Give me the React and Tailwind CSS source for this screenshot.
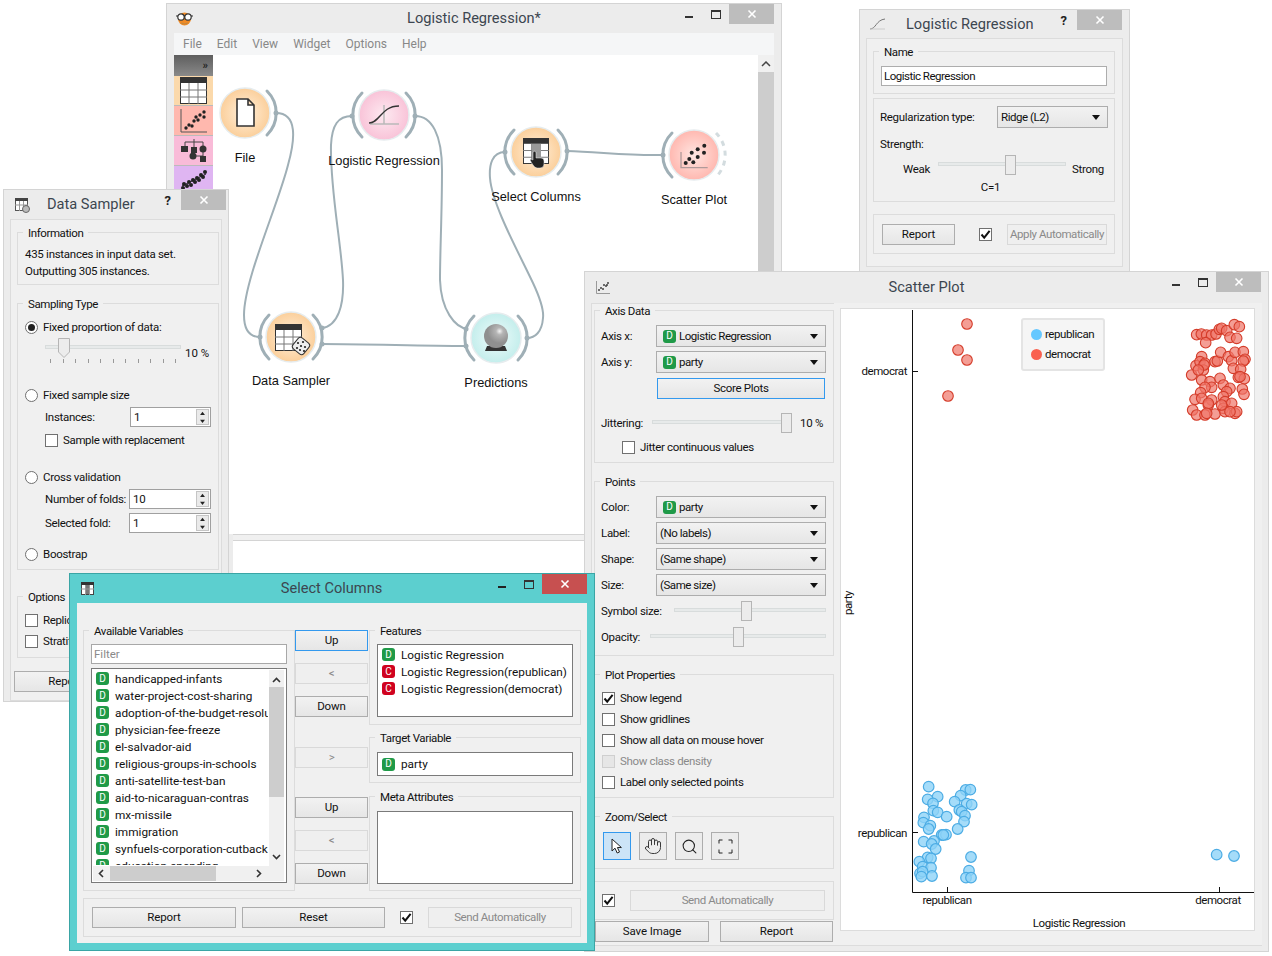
import React from "react";
import { Hand, Search } from "lucide-react";

const X = () => (
  <svg width="10" height="10" viewBox="0 0 10 10"><path d="M1.5 1.5 8.5 8.5M8.5 1.5 1.5 8.5" stroke="#fff" strokeWidth="1.6" /></svg>
);

function Controls({ active, minmax, help, closeClass = "right-[7px]" }) {
  return (
    <div className="absolute inset-0 pointer-events-none">
      {help && <span className={`absolute top-[1px] text-[13px] font-bold text-[#222] ${help}`}>?</span>}
      {minmax && (
        <>
          <span className={`absolute right-[88px] top-[12px] h-[2px] w-[8px] ${active ? "bg-[#222]" : "bg-[#333]"}`} />
          <span className="absolute right-[60px] top-[6px] h-[9px] w-[10px] border border-t-2 border-[#333]" />
        </>
      )}
      <span className={`absolute top-0 flex h-[20px] w-[45px] items-center justify-center ${closeClass} ${active ? "bg-[#c75050]" : "bg-[#bdbdbd]"}`}>
        <X />
      </span>
    </div>
  );
}

function Win({ className, title, titleClass, icon, active, minmax, help, closeClass, children, titleH }) {
  return (
    <div className={`absolute flex flex-col border ${active ? "border-[#3aa5a5] bg-[#5ccfcf]" : "border-[#d4d4d4] bg-[#ececec]"} ${className}`}>
      <div className={`relative flex shrink-0 items-center ${titleH} ${titleClass}`}>
        {icon}
        <span className="text-[14.6px] leading-none text-[#3c4650]">{title}</span>
        <Controls active={active} minmax={minmax} help={help} closeClass={closeClass} />
      </div>
      {children}
    </div>
  );
}

function Group({ title, className = "", children }) {
  return (
    <div className={`relative shrink-0 border border-[#dcdcdc] ${className}`}>
      {title && <span className="absolute left-[5px] top-[-7px] bg-[#f0f0f0] px-[5px] text-[11.5px] leading-[15px] tracking-[-0.4px] text-[#111]">{title}</span>}
      {children}
    </div>
  );
}

function Btn({ className = "", children, disabled, blue }) {
  return (
    <div
      className={`flex shrink-0 items-center justify-center whitespace-nowrap border pt-px text-[11.5px] leading-none ${
        disabled ? "border-[#d9d9d9] bg-[#efefef] tracking-[-0.4px] text-[#8a8a8a]" : blue ? "border-[#3399ee] bg-linear-to-b from-[#f2f2f2] to-[#e6e6e6] tracking-[-0.3px] text-[#111]" : "border-[#adadad] bg-linear-to-b from-[#f2f2f2] to-[#e6e6e6] tracking-[-0.1px] text-[#111]"
      } ${className}`}
    >
      {children}
    </div>
  );
}

function Check({ checked, disabled, label, className = "" }) {
  return (
    <div className={`flex h-[18px] shrink-0 items-center gap-[5px] text-[11.5px] tracking-[-0.35px] ${disabled ? "text-[#8a8a8a]" : "text-[#111]"} ${className}`}>
      <span className={`flex h-[13px] w-[13px] shrink-0 items-center justify-center border ${disabled ? "border-[#cfcfcf] bg-[#e6e6e6]" : "border-[#707070] bg-white"}`}>
        {checked && (
          <svg width="11" height="11" viewBox="0 0 11 11"><path d="M1.5 5.5 4.2 8.6 9.6 1.8" fill="none" stroke="#111" strokeWidth="2" /></svg>
        )}
      </span>
      {label && <span className="relative top-px whitespace-nowrap">{label}</span>}
    </div>
  );
}

function Radio({ checked, label, className = "" }) {
  return (
    <div className={`flex h-[18px] shrink-0 items-center gap-[5px] text-[11.5px] tracking-[-0.28px] text-[#111] ${className}`}>
      <span className="flex h-[13px] w-[13px] shrink-0 items-center justify-center rounded-full border border-[#707070] bg-white">
        {checked && <span className="h-[7px] w-[7px] rounded-full bg-[#222]" />}
      </span>
      <span className="relative top-px whitespace-nowrap">{label}</span>
    </div>
  );
}

function Badge({ t = "D" }) {
  return (
    <span className={`flex h-[13px] w-[13px] shrink-0 items-center justify-center rounded-[3px] text-[10px] leading-none text-white ${t === "D" ? "bg-[#1f9a48]" : "bg-[#d0021f]"}`}>{t}</span>
  );
}

const Arrow = () => (
  <svg className="absolute right-[7px] top-[8px]" width="8" height="5" viewBox="0 0 8 5"><path d="M0 0h8L4 5z" fill="#111" /></svg>
);

function Combo({ className = "", badge, children }) {
  return (
    <div className={`relative flex h-[22px] shrink-0 items-center border border-[#adadad] bg-linear-to-b from-[#f2f2f2] to-[#e6e6e6] text-[11.5px] text-[#111] ${badge ? "gap-[3px] pl-[6px]" : "pl-[3px]"} ${className}`}>
      {badge && <Badge />}
      <span className="relative top-px whitespace-nowrap tracking-[-0.45px]">{children}</span>
      <Arrow />
    </div>
  );
}

function Spin({ value, className = "" }) {
  return (
    <div className={`relative flex h-[20px] shrink-0 items-center border border-[#a0a0a0] bg-white pl-[3px] pt-px text-[11.5px] text-[#111] ${className}`}>
      {value}
      <span className="absolute bottom-[1px] right-[1px] top-[1px] flex w-[13px] flex-col gap-px border border-[#c5c5c5] bg-[#eaeaea]">
        <svg className="flex-1" viewBox="0 0 13 8"><path d="M3.5 6h6L6.5 2z" fill="#222" /></svg>
        <svg className="flex-1" viewBox="0 0 13 8"><path d="M3.5 2h6L6.5 6z" fill="#222" /></svg>
      </span>
    </div>
  );
}

function Slider({ className = "", handle }) {
  return (
    <div className={`relative h-[20px] shrink-0 ${className}`}>
      <div className="absolute inset-x-0 top-[7px] h-[4px] border border-[#d8dcdc] bg-[#e7eaea]" />
      <div className={`absolute top-0 h-[20px] w-[11px] border border-[#b5b5b5] bg-[#ececec] ${handle}`} />
    </div>
  );
}

const Row = ({ className = "", children }) => <div className={`flex items-center whitespace-nowrap text-[11.5px] tracking-[-0.3px] text-[#111] [&>span]:relative [&>span]:top-px ${className}`}>{children}</div>;

const TableGlyph = ({ x = 0, y = 0, s = 27 }) => (
  <g transform={`translate(${x} ${y}) scale(${s / 27})`}>
    <rect x="0.5" y="0.5" width="26" height="26" fill="#fff" stroke="#333" />
    <rect width="27" height="6" fill="#333" />
    <path d="M9 6v21M18 6v21M0 13h27M0 20h27" stroke="#777" strokeWidth="1" />
  </g>
);

const Dots = ({ pts, r = 1.7, fill = "#222" }) => pts.map((p, i) => <circle key={i} cx={p[0]} cy={p[1]} r={r} fill={fill} />);

const scatterPts = [[-8.3, 8], [-4.7, 4], [-0.7, 7.3], [-2.3, -2.3], [3.7, -5.7], [3.7, 2], [10.3, -9.3], [10, -2.3]];

const nodes = [
  { x: 245, y: 113, g: "go", label: "File", ly: 157.5, arcs: "r", icon: (
    <path d="M-8 -14H3L9 -8V13H-8Z M3 -14V-8H9" fill="#fff" stroke="#333" strokeWidth="1.6" />
  ) },
  { x: 384, y: 115, g: "gp", label: "Logistic Regression", ly: 160.5, arcs: "lr", icon: (
    <g fill="none">
      <path d="M0 -10V9M-14 9H15" stroke="#b9b9b9" strokeWidth="1.5" />
      <path d="M-15 8C-4 8 -3 -9 15 -9" stroke="#333" strokeWidth="1.4" />
    </g>
  ) },
  { x: 536, y: 152, g: "go", label: "Select Columns", ly: 196.5, arcs: "lr", icon: (
    <g>
      <TableGlyph x={-13} y={-14} s={26} />
      <rect x="-4" y="-8" width="9" height="20" fill="#9a9a9a" />
      <path d="M-3 0q1.5-1.5 3 0V6h5q3 0 3 3v3q0 4-4 4h-3q-2 0-4-3L-6 8q1-1.5 3 0z" fill="#222" stroke="#eee" strokeWidth="0.5" />
    </g>
  ) },
  { x: 694, y: 155, g: "gr", label: "Scatter Plot", ly: 199.5, arcs: "l", icon: (
    <g>
      <path d="M-13 -3V12.7H13.7" fill="none" stroke="#b09a9a" strokeWidth="1.3" />
      <Dots pts={scatterPts} r={2} />
    </g>
  ) },
  { x: 291, y: 337, g: "go", label: "Data Sampler", ly: 380.5, arcs: "lr", icon: (
    <g>
      <TableGlyph x={-16} y={-13} />
      <g transform="translate(10 9)">
        <rect x="-7" y="-7" width="14" height="14" rx="3" fill="#eee" stroke="#333" transform="rotate(40)" />
        <Dots pts={[[-3, -3], [2, -4], [-4, 2], [0, 0], [4, 1], [-1, 4], [3, 5]]} r={1.1} />
      </g>
    </g>
  ) },
  { x: 496, y: 338, g: "gc", label: "Predictions", ly: 382.5, arcs: "lr", icon: (
    <g>
      <path d="M-9 8H9L11 13H-11Z" fill="#333" />
      <circle cy="-2" r="12" fill="url(#ball)" />
    </g>
  ) },
];

const ArcR = "M 22 -22 A 31 31 0 0 1 22 22";
const ArcL = "M -22 -22 A 31 31 0 0 0 -22 22";

function Workflow() {
  return (
    <div className="relative h-full flex-1 overflow-hidden bg-white">
      <svg className="absolute left-0 top-0" width="545" height="480" viewBox="213 55 545 480">
        <defs>
          <radialGradient id="go"><stop offset="0" stopColor="#fff0dc" /><stop offset="1" stopColor="#fbcf9b" /></radialGradient>
          <radialGradient id="gp"><stop offset="0" stopColor="#fdeaf1" /><stop offset="1" stopColor="#f9c3d8" /></radialGradient>
          <radialGradient id="gr"><stop offset="0" stopColor="#ffe6e2" /><stop offset="1" stopColor="#ffb8b0" /></radialGradient>
          <radialGradient id="gc"><stop offset="0" stopColor="#eefbfb" /><stop offset="1" stopColor="#c4eeec" /></radialGradient>
          <radialGradient id="ball" cx="0.65" cy="0.3"><stop offset="0" stopColor="#f4f4f4" /><stop offset="0.3" stopColor="#b5b5b5" /><stop offset="1" stopColor="#8f8f8f" /></radialGradient>
        </defs>
        <g fill="none" stroke="#9fafb6" strokeWidth="2">
          <path d="M276 113C298 113 295 140 288 165C278 205 244 280 244 315C244 330 250 337 260 337" />
          <path d="M322 328C338 326 344 305 343 280C341 240 330 190 331 145C332 125 338 116 352 116" />
          <path d="M415 116C432 116 442 135 442 170C442 215 440 250 440 280C441 310 455 328 468 329" />
          <path d="M505 152C492 152 489 165 490 178C492 205 520 255 533 283C540 298 544 310 543 318C542 332 535 338 527 338" />
          <path d="M567 151C600 152 630 156 663 155" />
          <path d="M322 344C370 344 420 346 466 346" />
        </g>
        {[[276, 113], [352, 116], [415, 116], [505, 152], [567, 151], [663, 155], [260, 337], [322, 328], [322, 344], [466, 329], [466, 346], [527, 338]].map((p, i) => (
          <circle key={i} cx={p[0]} cy={p[1]} r="2.5" fill="#9fafb6" />
        ))}
        {nodes.map((n) => (
          <g key={n.label} transform={`translate(${n.x} ${n.y})`}>
            <circle r="25" fill={`url(#${n.g})`} stroke="#e6ecee" strokeWidth="1.5" />
            {n.arcs.includes("r") && <path d={ArcR} fill="none" stroke="#9fafb6" strokeWidth="3" strokeLinecap="round" />}
            {n.arcs.includes("l") && <path d={ArcL} fill="none" stroke="#9fafb6" strokeWidth="3" strokeLinecap="round" />}
            {n.label === "Scatter Plot" && <path d={ArcR} fill="none" stroke="#d3dcdf" strokeWidth="3" strokeDasharray="5 5" />}
            {n.icon}
          </g>
        ))}
      </svg>
      {nodes.map((n) => (
        <span
          key={n.label}
          className="absolute -translate-x-1/2 -translate-y-1/2 whitespace-nowrap [font-family:'Liberation_Sans',sans-serif] text-[12.8px] leading-none text-[#111]"
          style={{ left: n.x - 213, top: n.ly - 55 }}
        >
          {n.label}
        </span>
      ))}
    </div>
  );
}

const Side = ({ bg, children, h = "h-[30px]" }) => (
  <div className={`flex shrink-0 items-center justify-center border-b border-[#bbb] ${bg} ${h}`}>{children}</div>
);

function MainWindow() {
  return (
    <Win className="left-[166px] top-[3px] h-[700px] w-[616px]" title="Logistic Regression*" titleH="h-[29px]" titleClass="justify-center" minmax
      icon={
        <svg className="absolute left-[9px] top-[7px]" width="17" height="15" viewBox="0 0 17 15">
          <circle cx="8.5" cy="8" r="6.5" fill="#f08a24" />
          <path d="M5 12q3.5 2 7 0" stroke="#b84" fill="none" />
          <circle cx="5" cy="6" r="3.2" fill="#fff" stroke="#333" strokeWidth="1.2" />
          <circle cx="12" cy="6" r="3.2" fill="#fff" stroke="#333" strokeWidth="1.2" />
          <path d="M0 5h2M8 5h1M15 5h2" stroke="#333" />
        </svg>
      }
    >
      <div className="mx-[7px] flex h-[22px] shrink-0 items-center gap-[15px] bg-[#f5f6f7] pl-[9px] text-[12px] text-[#888]">
        <span>File</span><span>Edit</span><span>View</span><span>Widget</span><span>Options</span><span>Help</span>
      </div>
      <div className="mx-[7px] flex h-[479px] shrink-0">
        <div className="flex w-[39px] shrink-0 flex-col">
          <div className="flex h-[21px] shrink-0 items-center justify-end bg-linear-to-b from-[#5e5e5e] to-[#8a8a8a] pr-[5px] text-[11px] font-bold leading-none text-[#222]">»</div>
          <Side bg="bg-[#fbd9ab]">
            <svg width="27" height="27" viewBox="0 0 27 27"><TableGlyph /></svg>
          </Side>
          <Side bg="bg-[#ffb8ae]">
            <svg width="27" height="25" viewBox="0 0 27 25">
              <path d="M1 1V24H27" fill="none" stroke="#555" />
              <Dots pts={[[6, 20], [9, 17], [12, 18], [14, 13], [18, 12], [20, 7], [24, 9], [24, 4], [16, 9]]} />
            </svg>
          </Side>
          <Side bg="bg-[#f9bbd8]">
            <svg width="27" height="25" viewBox="0 0 27 25">
              <path d="M5 8V4H23V8M14 1V9M23 12V18M14 18H23" fill="none" stroke="#444" />
              <rect x="1" y="8" width="7" height="6" fill="#333" />
              <rect x="11" y="9" width="6" height="6" fill="#333" />
              <circle cx="23" cy="11" r="3.5" fill="#333" />
              <circle cx="13" cy="18" r="3.5" fill="#333" />
              <rect x="20" y="18" width="6" height="6" fill="#333" />
            </svg>
          </Side>
          <Side bg="bg-[#dfb5f2]" h="h-[60px] items-start pt-[3px]">
            <svg width="27" height="22" viewBox="0 0 27 22">
              <path d="M2 17 26 5" stroke="#222" />
              <Dots pts={[[3, 19], [4, 15], [7, 17], [9, 13], [11, 16], [13, 11], [15, 13], [17, 9], [19, 11], [21, 6], [23, 8], [25, 3]]} r={2} />
            </svg>
          </Side>
        </div>
        <Workflow />
        <div className="relative w-[16px] shrink-0 bg-[#f0f0f0]">
          <svg className="absolute left-[3px] top-[6px]" width="10" height="6" viewBox="0 0 10 6"><path d="M1 5 5 1 9 5" fill="none" stroke="#444" strokeWidth="1.5" /></svg>
          <div className="absolute inset-x-0 bottom-[14px] top-[17px] bg-[#cdcdcd]" />
        </div>
      </div>
      <div className="mx-[7px] ml-[66px] h-[7px] shrink-0 border-y border-[#d4d4d4] bg-[#f0f0f0]" />
      <div className="ml-[66px] flex-1 bg-white" />
    </Win>
  );
}

const DataIcon = () => (
  <svg className="absolute left-[11px] top-[8px]" width="15" height="15" viewBox="0 0 15 15">
    <rect x="0.5" y="0.5" width="12" height="12" fill="#fff" stroke="#555" />
    <rect width="13" height="3" fill="#444" />
    <path d="M4.5 3v10M8.5 3v10M0 7h13" stroke="#999" />
    <circle cx="11" cy="11" r="3.5" fill="#bbb" stroke="#666" />
  </svg>
);

function DataSampler() {
  return (
    <Win className="left-[3px] top-[189px] z-10 h-[513px] w-[226px]" title="Data Sampler" titleH="h-[29px]" titleClass="pl-[43px]" help="right-[57px]" closeClass="right-[2px]" icon={<DataIcon />}>
      <div className="mx-[6px] flex flex-1 flex-col border border-[#dcdcdc] bg-[#f0f0f0] px-[6px] pt-[12px]">
        <Group title="Information" className="h-[53px] w-[202px] pl-[7px] pt-[13px] text-[11.5px] leading-[17px] tracking-[-0.28px] text-[#111]">
          <div>435 instances in input data set.</div>
          <div>Outputting 305 instances.</div>
        </Group>
        <Group title="Sampling Type" className="mt-[18px] flex h-[267px] w-[202px] flex-col pl-[7px] pr-[7px] pt-[14px]">
          <Radio checked label="Fixed proportion of data:" />
          <div className="flex h-[50px] shrink-0 items-start pl-[20px] pt-[2px]">
            <div className="relative h-[30px] w-[136px]">
              <div className="absolute inset-x-0 top-[7px] h-[4px] border border-[#d8dcdc] bg-[#e7eaea]" />
              <svg className="absolute left-[13px] top-0" width="12" height="20" viewBox="0 0 12 20"><path d="M.5.5h11V14L6 19.5.5 14Z" fill="#ececec" stroke="#b5b5b5" /></svg>
              <div className="absolute inset-x-[5px] top-[21px] flex justify-between">
                {Array.from({ length: 11 }, (_, i) => <span key={i} className="h-[4px] w-px bg-[#999]" />)}
              </div>
            </div>
            <span className="ml-[4px] mt-[7px] whitespace-nowrap text-[11.5px] text-[#111]">10 %</span>
          </div>
          <Radio label="Fixed sample size" />
          <Row className="mt-[3px] h-[20px] pl-[20px]"><span className="w-[86px]">Instances:</span><Spin value="1" className="w-[81px]" /></Row>
          <Check label="Sample with replacement" className="ml-[20px] mt-[4px] gap-[4px]" />
          <Radio label="Cross validation" className="mt-[19px]" />
          <Row className="mt-[3px] h-[20px] pl-[20px]"><span className="w-[85px]">Number of folds:</span><Spin value="10" className="w-[82px]" /></Row>
          <Row className="mt-[4px] h-[20px] pl-[20px]"><span className="w-[85px]">Selected fold:</span><Spin value="1" className="w-[82px]" /></Row>
          <Radio label="Boostrap" className="mt-[12px]" />
        </Group>
        <Group title="Options" className="mt-[26px] flex h-[62px] w-[202px] flex-col gap-[3px] pl-[7px] pt-[14px]">
          <Check label="Replicable" />
          <Check label="Stratify" />
        </Group>
        <Btn className="-ml-[3px] mt-[13px] h-[21px] w-[102px]">Report</Btn>
      </div>
    </Win>
  );
}

function LogisticWin() {
  return (
    <Win className="left-[859px] top-[9px] z-10 h-[266px] w-[271px]" title="Logistic Regression" titleH="h-[28px]" titleClass="pl-[46px]" help="right-[62px]"
      icon={<svg className="absolute left-[10px] top-[8px]" width="15" height="12" viewBox="0 0 15 12"><path d="M0 11C6 11 6 2 15 1" fill="none" stroke="#777" /><path d="M0 11H15" stroke="#ccc" /></svg>}
    >
      <div className="mx-[6px] flex h-[229px] shrink-0 flex-col border border-[#dcdcdc] bg-[#f0f0f0] px-[6px] pt-[12px]">
        <Group title="Name" className="h-[43px] w-[242px] px-[7px] pt-[14px]">
          <div className="flex h-[20px] items-center border border-[#adadad] bg-white pl-[2px] pt-px text-[11.5px] tracking-[-0.5px] text-[#111]">Logistic Regression</div>
        </Group>
        <Group className="mt-[4px] h-[104px] w-[242px] px-[6px] pt-[8px]">
          <Row className="h-[20px]">
            <span className="w-[117px]">Regularization type:</span>
            <Combo className="h-[20px] w-[111px]">Ridge (L2)</Combo>
          </Row>
          <Row className="mt-[8px] h-[20px]">Strength:</Row>
          <Row className="mt-[0px] h-[20px]">
            <span className="ml-[23px] mt-[8px] w-[35px]">Weak</span>
            <Slider className="w-[128px]" handle="left-[67px]" />
            <span className="ml-[6px] mt-[8px]">Strong</span>
          </Row>
          <Row className="mt-[4px] justify-center pr-[7px]">C=1</Row>
        </Group>
        <Group className="mt-[12px] flex h-[40px] w-[242px] items-center pl-[8px]">
          <Btn className="h-[21px] w-[73px]">Report</Btn>
          <Check checked className="ml-[24px]" />
          <Btn disabled className="ml-[15px] h-[21px] w-[100px]">Apply Automatically</Btn>
        </Group>
      </div>
    </Win>
  );
}

const blue = [[236,80],[347,90],[361,89],[263,110],[233,118],[332,107],[314,125],[249,130],[350,131],[365,134],[250,152],[263,157],[290,170],[328,150],[335,155],[345,167],[222,172],[220,188],[241,197],[236,207],[342,185],[323,207],[275,225],[288,224],[280,225],[221,245],[252,243],[245,252],[257,267],[233,292],[243,295],[208,305],[218,320],[243,323],[210,340],[218,335],[214,350],[246,348],[363,291],[357,332],[348,353],[363,353],[1100,284],[1152,288]].map(([x, y]) => [850 + x / 3, 760 + y / 3]);
const red = [[560,104],[574,102],[590,105],[605,105],[618,102],[587,128],[628,88],[635,85],[650,92],[660,112],[680,115],[673,74],[688,80],[575,170],[558,197],[570,185],[585,190],[580,210],[615,185],[622,183],[632,157],[655,170],[665,182],[675,157],[700,155],[705,178],[700,183],[670,205],[692,208],[545,225],[575,240],[600,245],[630,235],[685,232],[703,236],[690,230],[605,262],[585,262],[572,278],[640,255],[660,265],[650,275],[697,267],[702,283],[640,290],[645,305],[665,310],[555,298],[575,295],[605,300],[595,315],[640,325],[548,330],[560,345],[585,345],[615,342],[645,335],[675,340],[680,335],[595,310],[590,340],[635,315],[660,335],[582,195],[565,210]].map(([x, y]) => [1010 + x / 3, 300 + y / 3]).concat([[967,324],[958,350],[967,360],[948,396]]);

function Plot() {
  return (
    <div className="relative ml-[6px] mt-[5px] h-[623px] w-[415px] shrink-0 border border-[#dcdcdc] bg-white text-[11.5px] tracking-[-0.42px] text-[#111]">
      <svg className="absolute left-0 top-0" width="413" height="621" viewBox="841 309 413 621">
        <path d="M912.5 310V892.5H1254M912.5 371.5H918M912.5 832.5H918M947.5 892V887M1219.5 892V887" fill="none" stroke="#111" />
        {blue.map((p, i) => <circle key={i} cx={p[0]} cy={p[1]} r="5.3" fill="#8fd3f8" fillOpacity="0.8" stroke="#4cacE4" strokeWidth="1.2" />)}
        {red.map((p, i) => <circle key={i} cx={p[0]} cy={p[1]} r="5.3" fill="#ef7568" fillOpacity="0.7" stroke="#d43c2a" strokeWidth="1.1" />)}
      </svg>
      <span className="absolute right-[347px] top-[55px] leading-[14px]">democrat</span>
      <span className="absolute right-[347px] top-[517px] leading-[14px]">republican</span>
      <span className="absolute left-0 top-[294px] w-[16px] -translate-y-1/2 rotate-180 text-center leading-[14px] [writing-mode:vertical-rl]">party</span>
      <span className="absolute left-[106px] top-[584px] -translate-x-1/2 leading-[14px]">republican</span>
      <span className="absolute left-[377px] top-[584px] -translate-x-1/2 leading-[14px]">democrat</span>
      <span className="absolute left-[238px] top-[607px] -translate-x-1/2 whitespace-nowrap leading-[14px]">Logistic Regression</span>
      <div className="absolute left-[180px] top-[9px] flex h-[53px] w-[84px] flex-col justify-center gap-[3px] rounded-[3px] border-2 border-[#e4e4e4] bg-[#f5f5f5] pl-[8px]">
        <div className="flex items-center gap-[3px]"><span className="h-[11px] w-[11px] rounded-full bg-[#66c8ff]" />republican</div>
        <div className="flex items-center gap-[3px]"><span className="h-[11px] w-[11px] rounded-full bg-[#f96150]" />democrat</div>
      </div>
    </div>
  );
}

const Tool = ({ active, children }) => (
  <div className={`flex h-[28px] w-[28px] items-center justify-center border ${active ? "border-[#3399ee] bg-[#cce4f7]" : "border-[#adadad] bg-[#ececec]"}`}>{children}</div>
);

function ScatterWin() {
  return (
    <Win className="left-[584px] top-[271px] z-20 h-[681px] w-[685px]" title="Scatter Plot" titleH="h-[31px]" titleClass="justify-center" minmax
      icon={<svg className="absolute left-[11px] top-[9px]" width="14" height="13" viewBox="0 0 14 13"><path d="M.5 0v12.5H14" fill="none" stroke="#999" /><Dots pts={[[3,9],[5,7],[7,8],[8,4],[10,5],[12,2],[11,4]]} r={1} fill="#444" /></svg>}
    >
      <div className="mx-[6px] flex h-[643px] shrink-0 border-b border-[#dcdcdc] bg-[#f0f0f0]">
        <div className="flex w-[243px] shrink-0 flex-col border-l border-t border-[#dcdcdc] pl-[2px] pt-[6px]">
          <Group title="Axis Data" className="h-[153px] w-[240px] px-[6px] pt-[14px]">
            <Row><span className="w-[55px]">Axis x:</span><Combo badge className="w-[170px]">Logistic Regression</Combo></Row>
            <Row className="mt-[4px]"><span className="w-[55px]">Axis y:</span><Combo badge className="w-[170px]">party</Combo></Row>
            <Btn blue className="ml-[56px] mt-[5px] h-[21px] w-[168px]">Score Plots</Btn>
            <Row className="mt-[14px] h-[20px]">
              <span className="w-[51px]">Jittering:</span>
              <Slider className="w-[140px]" handle="left-[129px]" />
              <span className="ml-[8px] whitespace-nowrap">10 %</span>
            </Row>
            <Check label="Jitter continuous values" className="ml-[21px] mt-[5px]" />
          </Group>
          <Group title="Points" className="mt-[18px] h-[175px] w-[240px] px-[6px] pt-[14px]">
            <Row><span className="w-[55px]">Color:</span><Combo badge className="w-[170px]">party</Combo></Row>
            <Row className="mt-[4px]"><span className="w-[55px]">Label:</span><Combo className="w-[170px]">(No labels)</Combo></Row>
            <Row className="mt-[4px]"><span className="w-[55px]">Shape:</span><Combo className="w-[170px]">(Same shape)</Combo></Row>
            <Row className="mt-[4px]"><span className="w-[55px]">Size:</span><Combo className="w-[170px]">(Same size)</Combo></Row>
            <Row className="mt-[5px] h-[20px]"><span className="w-[73px]">Symbol size:</span><Slider className="w-[152px]" handle="left-[67px]" /></Row>
            <Row className="mt-[6px] h-[20px]"><span className="w-[49px]">Opacity:</span><Slider className="w-[176px]" handle="left-[83px]" /></Row>
          </Group>
          <Group title="Plot Properties" className="mt-[18px] flex h-[124px] w-[240px] flex-col gap-[3px] pl-[7px] pt-[14px]">
            <Check checked label="Show legend" />
            <Check label="Show gridlines" />
            <Check label="Show all data on mouse hover" />
            <Check disabled label="Show class density" />
            <Check label="Label only selected points" />
          </Group>
          <Group title="Zoom/Select" className="mt-[18px] flex h-[53px] w-[240px] gap-[8px] pl-[8px] pt-[15px]">
            <Tool active>
              <svg width="14" height="16" viewBox="0 0 14 16"><path d="M2 1V13L5 10.2 7.2 15 9.5 14 7.4 9.5H11.4Z" fill="#fff" stroke="#222" /></svg>
            </Tool>
            <Tool><Hand size={18} strokeWidth={1.3} color="#333" /></Tool>
            <Tool><Search size={17} strokeWidth={1.5} color="#222" /></Tool>
            <Tool>
              <svg width="15" height="15" viewBox="0 0 15 15"><path d="M1 4.5V1H4.5M10.5 1H14V4.5M14 10.5V14H10.5M4.5 14H1V10.5" fill="none" stroke="#222" /></svg>
            </Tool>
          </Group>
          <Group className="mt-[12px] flex h-[39px] w-[240px] items-start pl-[7px] pt-[8px]">
            <Check checked className="h-[21px] w-[28px]" />
            <Btn disabled className="h-[21px] w-[195px]">Send Automatically</Btn>
          </Group>
          <div className="ml-[1px] mt-[1px] flex gap-[11px]">
            <Btn className="h-[21px] w-[114px]">Save Image</Btn>
            <Btn className="h-[21px] w-[113px]">Report</Btn>
          </div>
        </div>
        <Plot />
      </div>
    </Win>
  );
}

const vars = ["handicapped-infants", "water-project-cost-sharing", "adoption-of-the-budget-resolution", "physician-fee-freeze", "el-salvador-aid", "religious-groups-in-schools", "anti-satellite-test-ban", "aid-to-nicaraguan-contras", "mx-missile", "immigration", "synfuels-corporation-cutback", "education-spending"];

const VarRow = ({ t, children }) => (
  <div className="flex h-[17px] shrink-0 items-center gap-[6px] whitespace-nowrap pl-[4px] text-[11.8px] text-[#111]"><Badge t={t} /><span className="relative top-px">{children}</span></div>
);

const BtnCol = ({ label, className = "" }) => <Btn className={`h-[21px] w-[73px] ${className}`}>{label}</Btn>;

function SelectColumns() {
  return (
    <Win active className="left-[69px] top-[573px] z-30 h-[378px] w-[526px]" title="Select Columns" titleH="h-[29px]" titleClass="justify-center pr-[1px]" minmax
      icon={<svg className="absolute left-[11px] top-[8px]" width="13" height="13" viewBox="0 0 13 13"><rect x=".5" y=".5" width="12" height="12" fill="#fff" stroke="#444" /><rect width="13" height="3" fill="#333" /><rect x="5" y="3" width="3" height="9" fill="#777" /><path d="M0 7h13M4.5 3v10M8.5 3v10" stroke="#999" /></svg>}
    >
      <div className="mx-[7px] flex h-[340px] shrink-0 flex-col bg-[#f0f0f0] px-[6px] pt-[27px]">
        <div className="flex h-[261px] shrink-0">
          <Group title="Available Variables" className="h-[261px] w-[212px] px-[7px] pt-[13px]">
            <div className="flex h-[20px] items-center border border-[#a8a8a8] bg-white pl-[2px] pt-px text-[11.5px] text-[#8a8a8a]">Filter</div>
            <div className="relative mt-[4px] h-[215px] border border-[#7a7a7a] bg-white">
              <div className="h-[196px] w-[176px] overflow-hidden pt-[1px]">
                {vars.map((v) => <VarRow key={v}>{v}</VarRow>)}
              </div>
              <div className="absolute bottom-[1px] right-[2px] top-[1px] w-[15px] bg-[#f0f0f0]">
                <svg className="absolute left-[3px] top-[7px]" width="9" height="6" viewBox="0 0 9 6"><path d="M1 5 4.5 1.5 8 5" fill="none" stroke="#333" strokeWidth="1.6" /></svg>
                <div className="absolute inset-x-0 top-[17px] h-[110px] bg-[#cdcdcd]" />
                <svg className="absolute left-[3px] top-[184px]" width="9" height="6" viewBox="0 0 9 6"><path d="M1 1 4.5 4.5 8 1" fill="none" stroke="#333" strokeWidth="1.6" /></svg>
              </div>
              <div className="absolute bottom-[1px] left-[1px] right-[2px] h-[15px] bg-[#f0f0f0]">
                <svg className="absolute left-[5px] top-[3px]" width="6" height="9" viewBox="0 0 6 9"><path d="M5 1 1.5 4.5 5 8" fill="none" stroke="#333" strokeWidth="1.6" /></svg>
                <div className="absolute inset-y-0 left-[17px] w-[106px] bg-[#cdcdcd]" />
                <svg className="absolute left-[163px] top-[3px]" width="6" height="9" viewBox="0 0 6 9"><path d="M1 1 4.5 4.5 1 8" fill="none" stroke="#333" strokeWidth="1.6" /></svg>
              </div>
            </div>
          </Group>
          <div className="ml-[0px] flex w-[74px] shrink-0 flex-col">
            <Btn blue className="h-[21px] w-[73px]">Up</Btn>
            <Btn disabled className="mt-[12px] h-[21px] w-[73px]">&lt;</Btn>
            <BtnCol label="Down" className="mt-[12px]" />
            <Btn disabled className="mt-[30px] h-[21px] w-[73px]">&gt;</Btn>
            <BtnCol label="Up" className="mt-[29px]" />
            <Btn disabled className="mt-[12px] h-[21px] w-[73px]">&lt;</Btn>
            <BtnCol label="Down" className="mt-[12px]" />
          </div>
          <div className="flex w-[212px] shrink-0 flex-col">
            <Group title="Features" className="h-[95px] w-[212px] px-[7px] pt-[13px]">
              <div className="h-[73px] border border-[#7a7a7a] bg-white pt-[1px]">
                <VarRow>Logistic Regression</VarRow>
                <VarRow t="C">Logistic Regression(republican)</VarRow>
                <VarRow t="C">Logistic Regression(democrat)</VarRow>
              </div>
            </Group>
            <Group title="Target Variable" className="mt-[12px] h-[46px] w-[212px] px-[7px] pt-[14px]">
              <div className="flex h-[24px] items-center border border-[#7a7a7a] bg-white"><VarRow>party</VarRow></div>
            </Group>
            <Group title="Meta Attributes" className="mt-[13px] h-[95px] w-[212px] px-[7px] pt-[14px]">
              <div className="h-[73px] border border-[#7a7a7a] bg-white" />
            </Group>
          </div>
        </div>
        <Group className="mt-[7px] flex h-[39px] w-[498px] items-center pl-[8px]">
          <Btn className="h-[21px] w-[144px]">Report</Btn>
          <Btn className="ml-[6px] h-[21px] w-[143px]">Reset</Btn>
          <Check checked className="ml-[15px]" />
          <Btn disabled className="ml-[15px] h-[21px] w-[144px]">Send Automatically</Btn>
        </Group>
      </div>
    </Win>
  );
}

export default function App() {
  return (
    <div className="relative h-[956px] w-[1272px] overflow-hidden bg-white [font-family:Roboto,sans-serif]">
      <MainWindow />
      <LogisticWin />
      <DataSampler />
      <ScatterWin />
      <SelectColumns />
    </div>
  );
}
